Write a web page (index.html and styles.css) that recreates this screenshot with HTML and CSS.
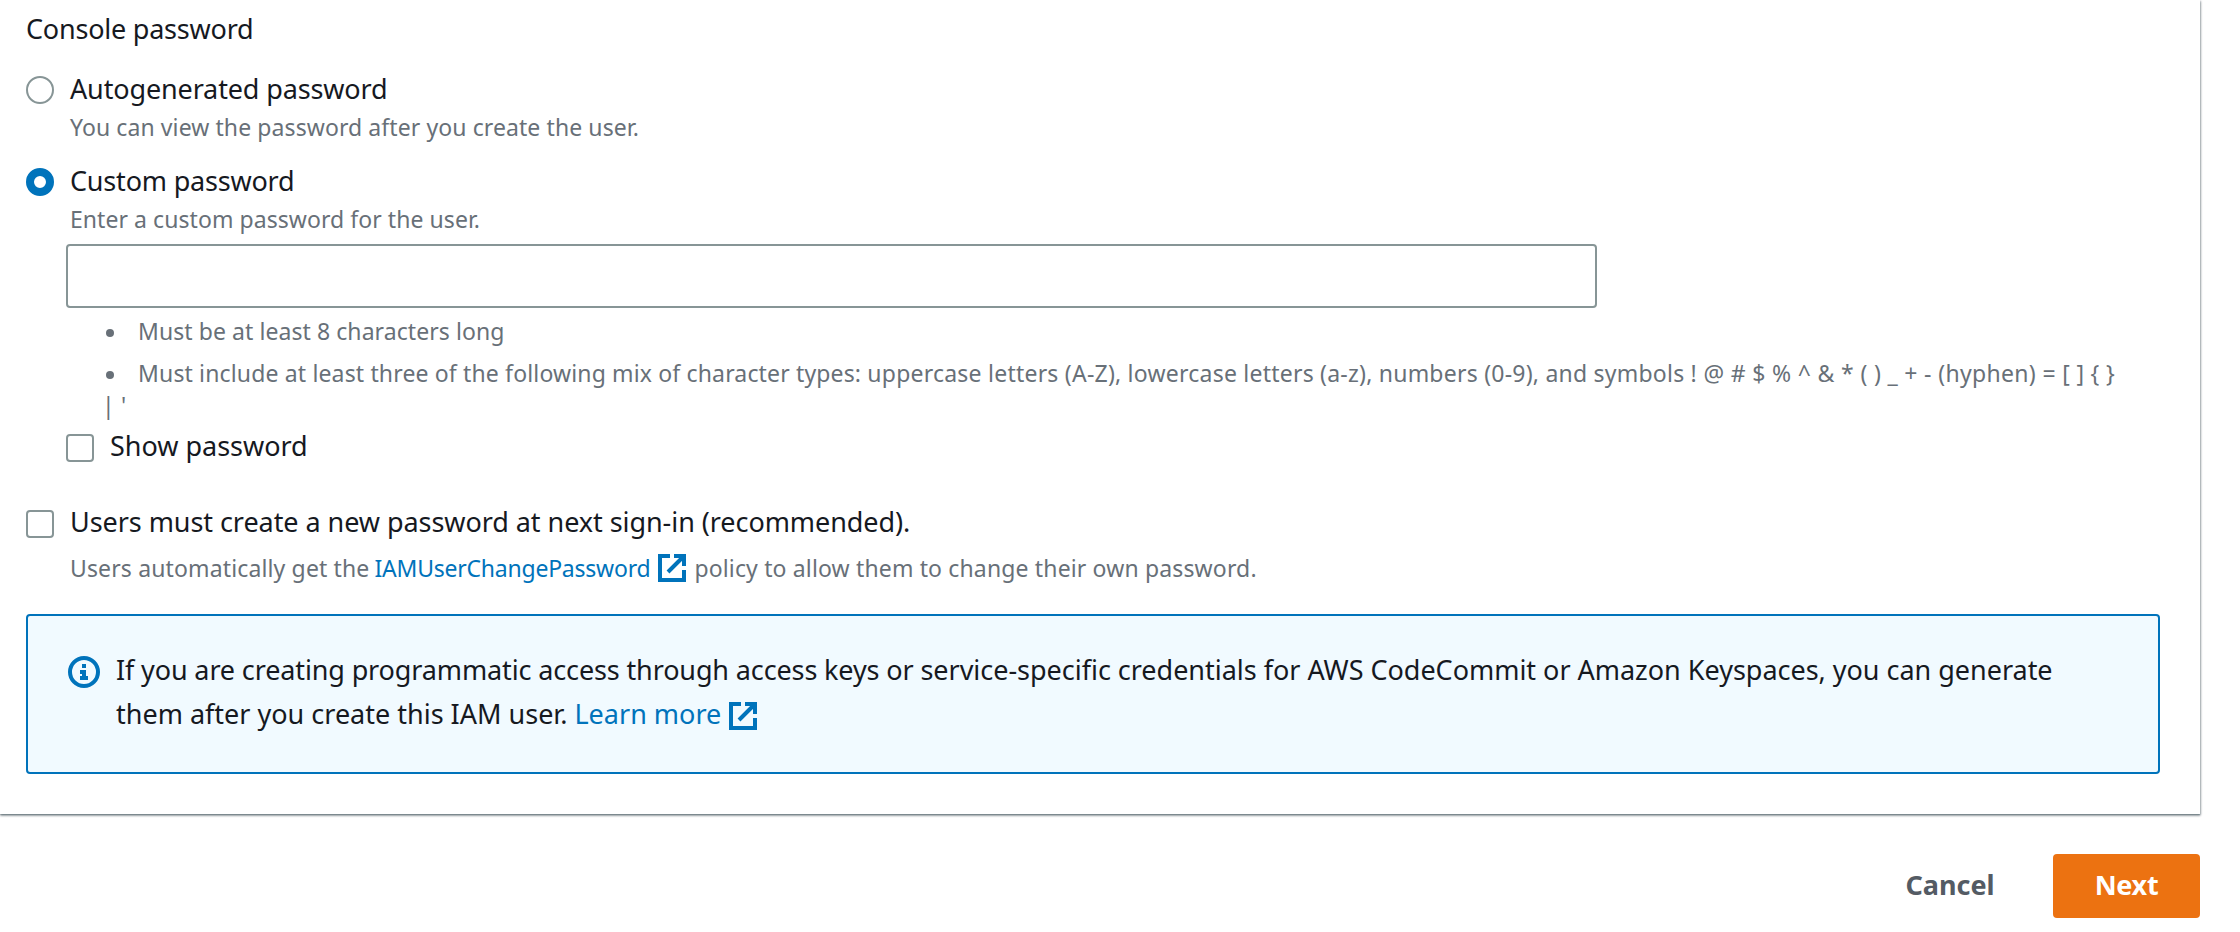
FILE: index.html
```html
<!DOCTYPE html>
<html lang="en">
<head>
<meta charset="utf-8">
<title>Console password</title>
<link rel="stylesheet" href="styles.css">
</head>
<body>
<svg class="defs" width="0" height="0" aria-hidden="true">
  <symbol id="external" viewBox="0 0 28 28">
    <path d="M12 2H2v24h24V16M16 2h10v10M25 3L10 18" fill="none" stroke="currentColor" stroke-width="4"/>
  </symbol>
</svg>
<main class="panel">
  <h2 class="heading title t-console">Console password</h2>

  <div class="option option-auto">
    <span class="radio"></span>
    <div>
      <div class="title t-auto">Autogenerated password</div>
      <div class="desc d-auto">You can view the password after you create the user.</div>
    </div>
  </div>

  <div class="option option-custom">
    <span class="radio checked"></span>
    <div>
      <div class="title t-custom">Custom password</div>
      <div class="desc d-custom">Enter a custom password for the user.</div>
    </div>
  </div>

  <div class="custom-body">
    <input class="field" type="password" aria-label="Custom password">
    <ul class="rules">
      <li class="rule-length">Must be at least 8 characters long</li>
      <li class="rule-mix"><span class="mix-start">Must include at least three of the following mix of character types: </span>uppercase letters (A-Z), lowercase letters (a-z), numbers (0-9), and symbols <span class="mix-symbols">! @ # $ % ^ &amp; * ( ) _ + - (hyphen) = [ ] { }</span><br><span class="mix-rest">| '</span></li>
    </ul>
    <div class="option">
      <span class="checkbox"></span>
      <div class="title t-show">Show password</div>
    </div>
  </div>

  <div class="option option-reset">
    <span class="checkbox"></span>
    <div>
      <div class="title t-reset">Users must create a new password at next sign-in (recommended).</div>
      <div class="desc policy">
        <span class="p-start">Users automatically get the</span>
        <a class="link p-link">IAMUserChangePassword</a>
        <svg class="ext"><use href="#external"/></svg>
        <span class="p-end">policy to allow them to change their own password.</span>
      </div>
    </div>
  </div>

  <section class="alert">
    <svg class="info" viewBox="0 0 32 32">
      <circle cx="16" cy="16" r="14" fill="none" stroke="currentColor" stroke-width="4"/>
      <path d="M14 8h4v4h-4zM12 14h6v6h2v4h-8v-4h2v-2h-2z" fill="currentColor"/>
    </svg>
    <div class="alert-text">
      <div class="a-first"><span class="a-lead">If you are creating programmatic access through access keys or </span>service-specific credentials for AWS CodeCommit or Amazon Keyspaces, you can generate</div>
      <div class="a-second">
        <span>them after you create this IAM user.</span>
        <a class="link a-link">Learn more</a>
        <svg class="ext"><use href="#external"/></svg>
      </div>
    </div>
  </section>
</main>
<footer class="actions">
  <button class="btn cancel">Cancel</button>
  <button class="btn next">Next</button>
</footer>
</body>
</html>
```
FILE: styles.css
```css
* { box-sizing: border-box; }
body {
  margin: 0;
  background: #fff;
  color: #16191f;
  font-family: "Noto Sans", "Open Sans", sans-serif;
  font-kerning: normal;
  white-space: nowrap;
}
.defs { position: absolute; }
.panel {
  width: 2200px;
  height: 814px;
  padding: 8px 40px 0 26px;
  background: #fff;
  box-shadow: 0 2px 2px 0 rgba(0, 28, 36, .3), 1px 1px 2px 0 rgba(0, 28, 36, .3), 0 1px 1px 0 rgba(0, 28, 36, .15);
}
.title { margin: 0; font-size: 27px; line-height: 40px; font-weight: 400; }
.desc { margin-top: 3px; font-size: 23px; line-height: 32px; color: #687078; }
.t-console, .t-auto, .t-custom { padding-top: 1px; height: 40px; }

.option { display: flex; gap: 16px; }
.option-auto { margin-top: 20px; }
.option-custom { margin-top: 17px; }
.option-reset { margin-top: 36px; }
.radio, .checkbox {
  flex: none;
  width: 28px;
  height: 28px;
  margin-top: 8px;
  border: 2px solid #879596;
  background: #fff;
}
.radio { border-radius: 50%; }
.radio.checked { border: 8px solid #0073bb; }
.checkbox { border-radius: 4px; }

.custom-body { padding-left: 40px; margin-top: 9px; }
.field {
  display: block;
  width: 1531px;
  height: 64px;
  border: 2px solid #879596;
  border-radius: 4px;
  background: #fff;
  outline: none;
}
.rules {
  margin: 7px 0 5px;
  padding: 0 0 0 40px;
  list-style: none;
  font-size: 23px;
  line-height: 32px;
  color: #687078;
}
.rules li::before {
  content: "";
  display: inline-block;
  width: 8px;
  height: 8px;
  margin-right: 24px;
  border-radius: 50%;
  background: #687078;
  vertical-align: 3px;
}
.rule-mix { margin-top: 10px; }
.mix-rest { margin-left: -4px; }

.link { color: #0073bb; }
.ext { flex: none; width: 28px; height: 28px; color: #0073bb; }
.policy { display: flex; align-items: center; margin-top: 10px; }
.p-link { margin-left: 5px; }
.policy .ext { margin: 1px 8px 1px 8px; }

.alert {
  display: flex;
  gap: 16px;
  width: 2134px;
  height: 160px;
  margin-top: 30px;
  padding: 32px 40px;
  border: 2px solid #0073bb;
  border-radius: 4px;
  background: #f1faff;
  font-size: 27px;
  line-height: 44px;
}
.info { flex: none; width: 32px; height: 32px; margin-top: 8px; color: #0073bb; }
.a-second { display: flex; align-items: center; }
.a-link { margin-left: 7px; }
.a-second .ext { margin: 3px 0 0 8px; }

.actions {
  display: flex;
  justify-content: flex-end;
  gap: 19px;
  width: 2200px;
  margin-top: 40px;
}
.btn {
  height: 64px;
  padding: 0 0 3px;
  border: 0;
  border-radius: 4px;
  font: 700 27px/60px "Noto Sans", "Open Sans", sans-serif;
}
.cancel { width: 168px; background: none; color: #545b64; }
.next { width: 147px; background: #ec7211; color: #fff; letter-spacing: -.3px; }

/* Tracking per text run */
.t-console { letter-spacing: -.22px; }
.t-auto { letter-spacing: -.14px; }
.t-custom { letter-spacing: -.2px; }
.t-show { letter-spacing: -.02px; }
.t-reset { letter-spacing: -.06px; }
.d-auto { letter-spacing: .09px; }
.d-custom { letter-spacing: .06px; }
.rule-length { letter-spacing: .07px; }
.rule-mix { letter-spacing: .228px; }
.mix-start { letter-spacing: .15px; }
.mix-symbols { letter-spacing: .33px; }
.p-start { letter-spacing: .14px; }
.p-link { letter-spacing: -.226px; }
.p-end { letter-spacing: .149px; }
.a-first { letter-spacing: -.02px; }
.a-lead { letter-spacing: -.13px; }
```
